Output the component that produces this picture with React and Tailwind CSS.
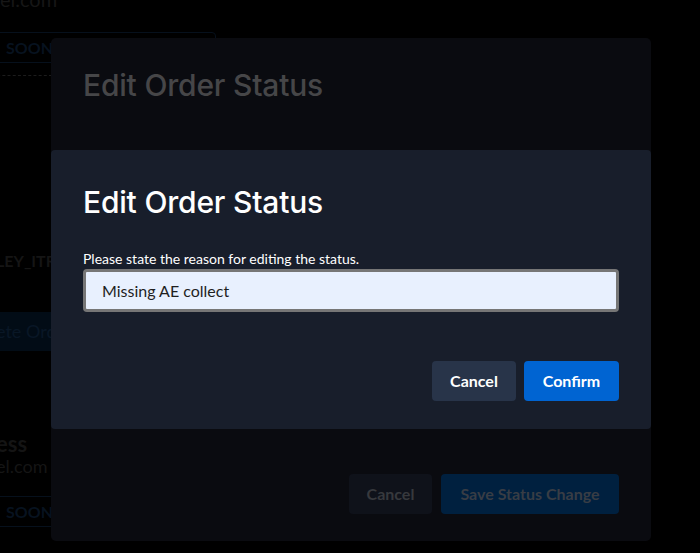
export default function App() {
  const lato = { fontFamily: 'Lato, "Noto Sans", sans-serif' };
  return (
    <div className="relative h-[553px] w-[700px] overflow-hidden bg-black" style={lato}>
      {/* dimmed page behind */}
      <div className="flex flex-col w-[230px] -ml-2 text-[#151515]">
        <div className="mt-[-11px] pl-2 text-[20px] leading-[20px] text-[#161616]">el.com</div>
        <div className="mt-[23px] flex h-[31px] w-[224px] items-center rounded border border-[#06101c] pl-[13px] text-[16px] font-bold text-[#07121f]">SOON</div>
        <div className="mt-[12px] w-[60px] border-t border-dashed border-[#1c1c1c]"></div>
        <div className="mt-[175px] pl-1 text-[16px] leading-[20px] font-bold">LEY_ITR</div>
        <div className="mt-[41px] flex h-[39px] w-[120px] items-center rounded bg-[#020c16] pl-[4px] text-[18px] text-[#091726]">ete Order</div>
        <div className="mt-[81px] pl-1 text-[22px] leading-[24px] font-bold text-[#141414]">ess</div>
        <div className="mt-[-1px] pl-1 text-[18px] leading-[22px] text-[#151515]">el.com</div>
        <div className="mt-[19px] flex h-[31px] w-[224px] items-center rounded border border-[#06101c] pl-[13px] text-[16px] font-bold text-[#07121f]">SOON</div>
      </div>

      {/* outer dimmed modal */}
      <div className="absolute left-[51px] top-[38px] flex h-[503px] w-[600px] flex-col rounded-[5px] bg-[#0a0b10] px-8">
        <h2 className="mt-[29px] text-3xl leading-9 font-medium tracking-[-0.2px] text-[#464648]" style={{ fontFamily: 'Inter, sans-serif' }}>Edit Order Status</h2>
        <div className="flex-1"></div>
        <div className="mb-[27px] flex justify-end gap-[9px]">
          <button className="h-10 w-[83px] rounded-[4px] bg-[#0f121a] text-[16px] font-bold text-[#37393d]">Cancel</button>
          <button className="h-10 w-[178px] rounded-[4px] bg-[#00203f] text-[16px] font-bold text-[#383d45]">Save Status Change</button>
        </div>
      </div>

      {/* inner modal */}
      <div className="absolute left-[51px] top-[150px] flex w-[600px] flex-col rounded-[4px] bg-[#181e2b] px-8 pt-[34px] pb-[28px]">
        <h2 className="text-3xl leading-9 font-medium tracking-[-0.2px] text-white" style={{ fontFamily: 'Inter, sans-serif' }}>Edit Order Status</h2>
        <label className="mt-[31px] text-sm leading-4 text-white">Please state the reason for editing the status.</label>
        <div className="mt-[2px] flex h-[43px] items-center rounded-[4px] border-[3px] border-[#767676] bg-[#e8f0fe] pl-4 text-[16px] text-[#1f1f1f]">
          Missing AE collect
        </div>
        <div className="mt-[49px] flex justify-end gap-2">
          <button className="h-10 w-[84px] rounded-[4px] bg-[#283449] text-[16px] font-bold text-white">Cancel</button>
          <button className="h-10 w-[95px] rounded-[4px] bg-[#0064d2] text-[16px] font-bold text-white">Confirm</button>
        </div>
      </div>
    </div>
  );
}
